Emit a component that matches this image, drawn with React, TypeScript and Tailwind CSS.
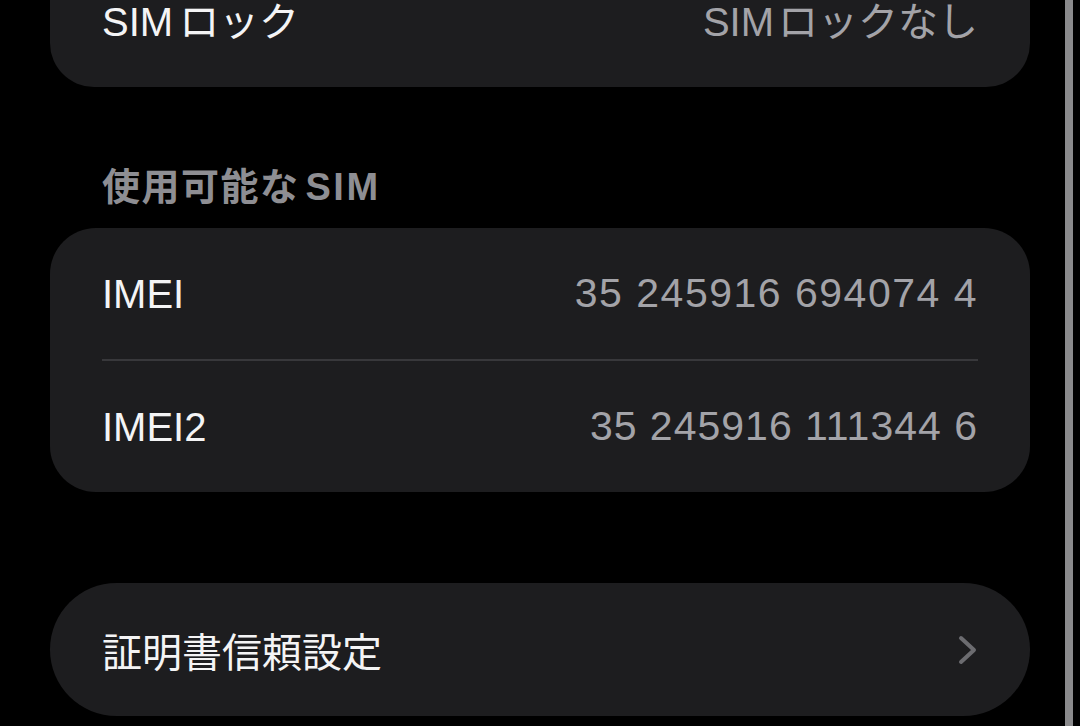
import React from "react";

const font = { fontFamily: '"Liberation Sans", "Noto Sans CJK JP", sans-serif' };

function Row({ label, value, track }: { label: string; value: string; track: string }) {
  return (
    <div className="flex h-[131px] items-center justify-between px-[52px]">
      <span className="text-[40px] leading-none text-[#f4f4f5]">{label}</span>
      <span className={`text-[41px] leading-none text-[#a3a3a8] ${track}`}>{value}</span>
    </div>
  );
}

export default function App() {
  return (
    <div className="flex h-[726px] w-[1080px] overflow-hidden bg-black" style={font}>
      <div className="ml-[50px] flex w-[980px] flex-col">
        <div className="-mt-[43px] flex h-[130px] items-center justify-between rounded-[44px] bg-[#1d1d1f] px-[52px]">
          <span className="text-[40px] leading-none text-[#f4f4f5]">
            <span className="mr-[6px]">SIM</span>ロック
          </span>
          <span className="text-[40px] leading-none text-[#a3a3a8]">
            <span className="mr-[4px]">SIM</span>ロックなし
          </span>
        </div>
        <div className="flex h-[141px] items-end px-[52px] pb-[22px]">
          <span className="text-[38px] font-bold leading-none tracking-[1.5px] text-[#8e8e93]">
            使用可能な<span className="ml-[6px] tracking-[2.5px]">SIM</span>
          </span>
        </div>
        <div className="rounded-[46px] bg-[#1d1d1f]">
          <Row label="IMEI" value="35 245916 694074 4" track="tracking-[1.5px]" />
          <div className="mx-[52px] h-[2px] bg-[#38383b]" />
          <Row label="IMEI2" value="35 245916 111344 6" track="tracking-[1px]" />
        </div>
        <div className="mt-[91px] flex h-[133px] items-center justify-between rounded-full bg-[#1d1d1f] px-[52px]">
          <span className="text-[40px] leading-none text-[#f4f4f5]" style={{ fontFamily: '"Noto Sans CJK JP", sans-serif' }}>
            証明書信頼設定
          </span>
          <svg width="20" height="30" viewBox="0 0 20 30" fill="none">
            <path d="M3 3 L16 15 L3 27" stroke="#6c6c70" strokeWidth="4" strokeLinecap="round" strokeLinejoin="round" />
          </svg>
        </div>
      </div>
      <div className="ml-[35px] h-full w-[8px] bg-[#8a8a8c]" />
    </div>
  );
}
